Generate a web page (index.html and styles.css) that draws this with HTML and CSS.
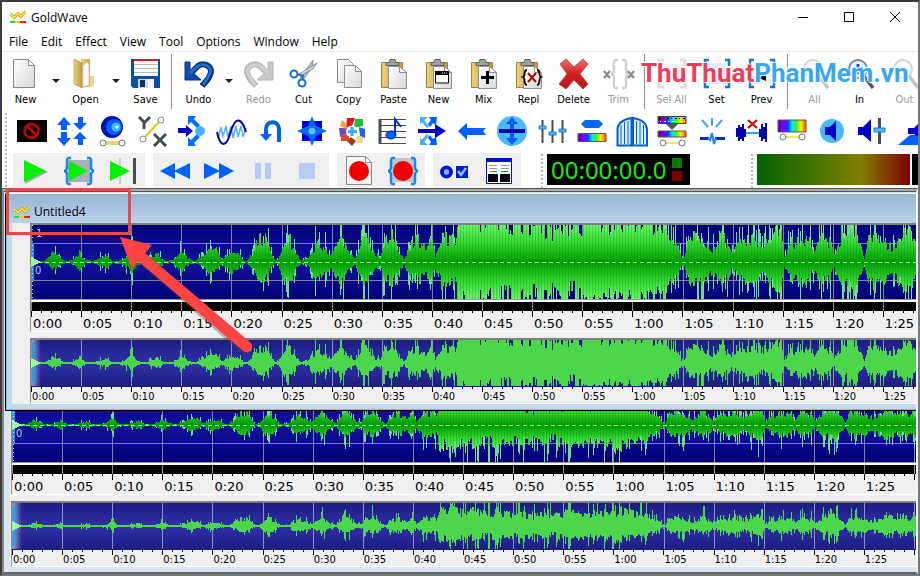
FILE: index.html
```html
<!DOCTYPE html>
<html lang="en">
<head>
<meta charset="utf-8">
<title>GoldWave</title>
<link rel="stylesheet" href="styles.css">
</head>
<body>
<svg class="defs" aria-hidden="true">
  <defs>
    <linearGradient id="paper" x1="0" y1="0" x2="1" y2="1"><stop offset="0" stop-color="#fff"/><stop offset="1" stop-color="#d8d8d8"/></linearGradient>
    <linearGradient id="tan" x1="0" y1="0" x2="1" y2="0"><stop offset="0" stop-color="#ecd07c"/><stop offset="1" stop-color="#c39a3c"/></linearGradient>
    <linearGradient id="redx" x1="0" y1="0" x2="0" y2="1"><stop offset="0" stop-color="#f07070"/><stop offset=".5" stop-color="#d42020"/><stop offset="1" stop-color="#b01818"/></linearGradient>
    <linearGradient id="rain" x1="0" y1="0" x2="1" y2="0"><stop offset="0" stop-color="#5000a0"/><stop offset=".2" stop-color="#8000ff"/><stop offset=".36" stop-color="#0040ff"/><stop offset=".5" stop-color="#00e8ff"/><stop offset=".65" stop-color="#30f030"/><stop offset=".82" stop-color="#f8f000"/><stop offset="1" stop-color="#ff5000"/></linearGradient>
    <linearGradient id="mainbg" x1="0" y1="0" x2="0" y2="1"><stop offset="0" stop-color="#000078"/><stop offset=".5" stop-color="#12129c"/><stop offset="1" stop-color="#000078"/></linearGradient>
    <linearGradient id="overbg" x1="0" y1="0" x2="0" y2="1"><stop offset="0" stop-color="#1c1c80"/><stop offset=".5" stop-color="#3030aa"/><stop offset="1" stop-color="#1c1c80"/></linearGradient>
    <linearGradient id="fade" x1="0" y1="0" x2="1" y2="0"><stop offset="0" stop-color="#c8c8f0" stop-opacity=".8"/><stop offset="1" stop-color="#c8c8f0" stop-opacity="0"/></linearGradient>
    <symbol id="logo" viewBox="0 0 16 16"><path d="M0 4.500l4 4 4-4 3 3 4.500-5" fill="none" stroke="#b09000" stroke-width="2.800"/><path d="M0 4.500l4 4 4-4 3 3 4.500-5" fill="none" stroke="#ffe838" stroke-width="1.600"/><path d="M0 12h5v2H0z" fill="#20e050"/><path d="M5 12h5v2H5z" fill="#f0d020"/><path d="M10 12h6v2h-6z" fill="#e02020"/></symbol>
    <symbol id="clip" viewBox="0 0 32 32"><path d="M3.500 4.500h21v25h-21z" fill="url(#tan)" stroke="#a88230"/><path d="M8 4.500h3l1-3h5l1 3h3v3H8z" fill="#a0a0a0" stroke="#606060"/><path d="M10.500 8.500h11l7 6v16h-18z" fill="url(#paper)" stroke="#909090"/><path d="M21.500 8.500v6h7z" fill="#fff" stroke="#909090"/></symbol>
    <symbol id="braces" viewBox="0 0 32 32"><path d="M8 3H6C4 3 4 4 4 6v6c0 3-1 4-3 4 2 0 3 1 3 4v6c0 2 0 3 2 3h2M24 3h2c2 0 2 1 2 3v6c0 3 1 4 3 4-2 0-3 1-3 4v6c0 2 0 3-2 3h-2" fill="none" stroke="#1888e8" stroke-width="2.500"/></symbol>
    <symbol id="lens" viewBox="0 0 32 32"><circle cx="14" cy="11" r="9" fill="#e4f2ff" stroke="#888" stroke-width="2"/><path d="M20 18l9 12" stroke="#555" stroke-width="3.500"/></symbol>
  </defs>
</svg>

<div class="app">
  <header class="titlebar">
    <svg class="logo"><use href="#logo"/></svg>
    <h1>GoldWave</h1>
    <div class="winbuttons">
      <button aria-label="Minimize"><svg viewBox="0 0 12 12"><path d="M1 6.500h10" /></svg></button>
      <button aria-label="Maximize"><svg viewBox="0 0 12 12"><path d="M1.500 1.500h9v9h-9z"/></svg></button>
      <button aria-label="Close"><svg viewBox="0 0 12 12"><path d="M1 1l10 10M11 1L1 11"/></svg></button>
    </div>
  </header>
  <nav class="menu">
    <button>File</button><button>Edit</button><button>Effect</button><button>View</button><button>Tool</button><button>Options</button><button>Window</button><button>Help</button>
  </nav>

  <div class="maintools">
    <button class="tool"><svg viewBox="0 0 32 32"><path d="M3.500 1.500h15l6 6v22h-21z" fill="url(#paper)" stroke="#888"/><path d="M18.500 1.500v6h6z" fill="#fff" stroke="#888"/></svg>New</button>
    <button class="drop" aria-label="New options"></button>
    <button class="tool"><svg viewBox="0 0 32 32"><path d="M11 1h9v22h3v5l-12 2z" fill="url(#tan)"/><path d="M13 8l4-4 2 3v20l-6 2z" fill="#f8f8f8" stroke="#bbb" stroke-width=".5"/><path d="M4 1l8 4v25l-8-4z" fill="url(#tan)" stroke="#b89040" stroke-width=".6"/><path d="M20 18h4v10h-4z" fill="#e8d49a"/></svg>Open</button>
    <button class="drop" aria-label="Open options"></button>
    <button class="tool"><svg viewBox="0 0 32 32"><path d="M1 1h29v29H3l-2-2z" fill="#0a4ea8"/><path d="M4 1h24v17H4z" fill="#fff"/><path d="M4 1h24v2H4z" fill="#c82030"/><path d="M4 6.500h24M4 10.500h24M4 14.500h24" stroke="#b8b8c0"/><path d="M8 21h16v9H8z" fill="#d8d8d8"/><path d="M10 22h5v7h-5z" fill="#063070"/><path d="M18 21h6v9h-6z" fill="#f8f8f8"/></svg>Save</button>
    <i class="sep"></i>
    <button class="tool"><svg viewBox="0 0 32 32"><path d="M9 14L15 8c7-5 16 2 12 9-1 4-4 6-8 11" fill="none" stroke="#062e7c" stroke-width="6"/><path d="M2 4h5v8l11 10H2z" fill="#0c4cb0" stroke="#062e7c"/><path d="M7 15l8-7c7-4 15 2 12 8l-7 11" fill="none" stroke="#1c6cd4" stroke-width="3"/></svg>Undo</button>
    <button class="drop" aria-label="Undo options"></button>
    <button class="tool" disabled><svg viewBox="0 0 32 32"><path d="M23 14l-6-6C10 3 1 10 5 17c1 4 4 6 8 11" fill="none" stroke="#b8b8b8" stroke-width="6"/><path d="M30 4h-5v8L14 22h16z" fill="#c8c8c8" stroke="#b4b4b4"/><path d="M25 15l-8-7C10 4 2 10 5 16l7 11" fill="none" stroke="#d0d0d0" stroke-width="3"/></svg>Redo</button>
    <button class="tool"><svg viewBox="0 0 32 32"><path d="M12 20L25 2l-1 8-9 12z" fill="#b4bcc4" stroke="#707880" stroke-width=".7"/><path d="M11 16L29 5l-4 6-13 7z" fill="#d0d4d8" stroke="#707880" stroke-width=".7"/><circle cx="6" cy="16" r="3.500" fill="none" stroke="#1870c0" stroke-width="2"/><circle cx="14" cy="25" r="3.500" fill="none" stroke="#1870c0" stroke-width="2"/><path d="M9 16l6 2-1 4" fill="none" stroke="#1870c0" stroke-width="2"/></svg>Cut</button>
    <button class="tool"><svg viewBox="0 0 32 32"><path d="M4.500 1.500h11l5 5v18h-16z" fill="url(#paper)" stroke="#909090"/><path d="M11.500 7.500h11l6 6v16h-17z" fill="url(#paper)" stroke="#909090"/><path d="M22.500 7.500v6h6z" fill="#fff" stroke="#909090"/></svg>Copy</button>
    <button class="tool"><svg><use href="#clip"/></svg>Paste</button>
    <button class="tool"><svg viewBox="0 0 32 32"><use href="#clip"/><path d="M12.500 14h13v11h-13z" fill="#fff" stroke="#000"/><path d="M12 13h14v4H12z"/><path d="M19 15h5" stroke="#fff" stroke-dasharray="1 1"/></svg>New</button>
    <button class="tool"><svg viewBox="0 0 32 32"><use href="#clip"/><path d="M19.500 13v13M13 19.500h13" stroke="#000" stroke-width="3"/></svg>Mix</button>
    <button class="tool"><svg viewBox="0 0 32 32"><use href="#clip"/><path d="M15 15l8 9M23 15l-8 9" stroke="#b00000" stroke-width="2"/><path d="M14 12c-4 0-1 6-4 7 3 1 0 8 4 8M24 12c4 0 1 6 4 7-3 1 0 8-4 8" fill="none" stroke="#000" stroke-width="1.800"/></svg>Repl</button>
    <button class="tool"><svg viewBox="0 0 32 32"><path d="M2 6l6-5 8 8 9-8 5 5-8 10 8 10-5 5-9-9-8 9-7-5 8-10z" fill="url(#redx)" stroke="#c03838" stroke-width=".8"/></svg>Delete</button>
    <button class="tool" disabled><svg viewBox="0 0 32 32"><path d="M15 2h-2c-3 0-2 4-2 9 0 3-1 5-3 5 2 0 3 2 3 5 0 5-1 9 2 9h2M19 2h2c3 0 2 4 2 9 0 3 1 5 3 5-2 0-3 2-3 5 0 5 1 9-2 9h-2" fill="none" stroke="#d0d0d0" stroke-width="2.500"/><path d="M1 13l6 7M7 13l-6 7M25 13l6 7M31 13l-6 7" stroke="#888" stroke-width="2"/></svg>Trim</button>
    <i class="sep"></i>
    <button class="tool" disabled><svg viewBox="0 0 32 32"><path d="M8 2H3v6M24 2h5v6M3 23v6h5M29 23v6h-5M3 12v7M29 12v7" fill="none" stroke="#ddd" stroke-width="3"/><path d="M6 6h20v19H6z" fill="#f0f0f0"/></svg>Sel All</button>
    <button class="tool"><svg viewBox="0 0 32 32"><path d="M8 2H4v6M24 2h4v6M4 23v6h4M28 23v6h-4" fill="none" stroke="#1878d0" stroke-width="2.500"/><path d="M7 5h18v21H7z" fill="#e4ecf6"/></svg>Set</button>
    <button class="tool"><svg viewBox="0 0 32 32"><path d="M8 2H4v6M24 2h4v6M4 23v6h4M28 23v6h-4" fill="none" stroke="#1878d0" stroke-width="2.500"/><path d="M7 5h18v21H7z" fill="#eaf1f8"/><path d="M13 20l7-5v8z"/></svg>Prev</button>
    <i class="sep"></i>
    <button class="tool faint" disabled><svg><use href="#lens"/></svg>All</button>
    <button class="tool"><svg viewBox="0 0 32 32"><use href="#lens"/><path d="M14 6v10M9 11h10" stroke="#1060c0" stroke-width="3"/></svg>In</button>
    <button class="tool faint" disabled><svg><use href="#lens"/></svg>Out</button>
    <div class="watermark"><span>ThuThuat</span><span class="wm2">PhanMem.vn</span></div>
  </div>

  <div class="lower">
    <i class="grip"></i>
    <div class="rows">
      <div class="effects">
        <button aria-label="Censor"><svg viewBox="0 0 32 32"><path d="M1 5h30v22H1z"/><circle cx="15.500" cy="16" r="7" fill="none" stroke="#c80000" stroke-width="2.500"/><path d="M11 11l10 10" stroke="#c80000" stroke-width="2.500"/></svg></button>
        <button aria-label="Compressor"><svg viewBox="0 0 32 32"><path d="M8 2l7 8h-4v5H5v-5H1zM8 31l7-8h-4v-6H5v6H1zM24 15l7-7h-4V2h-5v6h-5zM24 17l7 7h-4v6h-5v-6h-5z" fill="#0060ff"/></svg></button>
        <button aria-label="Doppler"><svg viewBox="0 0 32 32"><circle cx="16" cy="12" r="11" fill="#0010b0"/><circle cx="18" cy="12" r="8" fill="#0060ff"/><circle cx="20" cy="12" r="4.500" fill="#48b8ff"/><circle cx="21" cy="12" r="1.500" fill="#fff"/><path d="M8 28h17" stroke="#b8a820" stroke-width="3"/><path d="M8 28h17" stroke="#fff060" stroke-width="1.500"/><circle cx="7" cy="28" r="3" fill="#fff" stroke="#777"/><circle cx="26" cy="28" r="3" fill="#fff" stroke="#777"/></svg></button>
        <button aria-label="Expression"><svg viewBox="0 0 32 32"><path d="M3 2l5 5v7M14 2L8 8M18 19l12 12M30 19L18 31" fill="none" stroke="#444c54" stroke-width="3"/><path d="M7 24L24 6" stroke="#d8d030" stroke-width="2.500"/><circle cx="25" cy="5" r="3" fill="#fff" stroke="#888"/><circle cx="7" cy="24" r="3" fill="#fff" stroke="#888"/></svg></button>
        <button aria-label="Echo"><svg viewBox="0 0 32 32"><path d="M12 1h8l-2 3 6 6-3 3-6-6-3 3zM12 31h8l-2-3 6-6-3-3-6 6-3-3z" fill="#0070ff"/><path d="M2 13h8V10l7 6-7 6v-4H2z" fill="#0000c0"/><circle cx="24" cy="16" r="5" fill="#48b0ff"/></svg></button>
        <button aria-label="Filter"><svg viewBox="0 0 32 32"><path d="M3 21l2-9 2 9 3-10 2 11 3-11 2 12 3-12 2 11 3-11 2 11 3-9" fill="none" stroke="#58b0e8" stroke-width="1.500"/><path d="M1 17C4 32 10 33 14 19S24-2 30 17" fill="none" stroke="#0000a8" stroke-width="2"/></svg></button>
        <button aria-label="Reverse"><svg viewBox="0 0 32 32"><path d="M10 20v-6c0-9 13-9 13 0v13" fill="none" stroke="#0060e8" stroke-width="4"/><path d="M4 19h12l-6 7z" fill="#0060ff"/></svg></button>
        <button aria-label="Mechanize"><svg viewBox="0 0 32 32"><path d="M6 6h20v20H6z" fill="#0000c8"/><path d="M16 1l4 10 11 5-11 5-4 10-4-10-11-5 11-5z" fill="#0068ff"/><circle cx="16" cy="16" r="3.500" fill="#60c0ff"/></svg></button>
        <button aria-label="Pitch wheel"><svg viewBox="0 0 32 32"><path d="M11 3h8l-3 8-6 2z" fill="#e01020"/><path d="M19 4h8v7l-9 2z" fill="#20c030"/><path d="M23 12l6 2v9l-5-2z" fill="#2060f0"/><path d="M21 20l6 2v6h-7z" fill="#f0d890"/><path d="M15 22l5 4-4 5-5-5z" fill="#904010"/><path d="M5 21l8-2v7H5z" fill="#e04820"/><path d="M3 13l8 0v6l-7 3z" fill="#7050c0"/><path d="M6 5l5 4-1 5-6-3z" fill="#f0a850"/><circle cx="16" cy="16.500" r="6" fill="#fff"/><path d="M16 12v9M12 16.500h9" stroke="#30b0ff" stroke-width="3"/></svg></button>
        <button aria-label="Pitch"><svg viewBox="0 0 32 32"><path d="M4 4.500h26M4 10.500h26M4 16.500h26M4 22.500h26M4 28.500h26" stroke="#444c54"/><path d="M4 4v25" stroke="#444c54" stroke-width="3"/><ellipse cx="15" cy="20" rx="5" ry="4" fill="#0060ff" stroke="#0020a0"/><path d="M19 20V4l6 8" fill="none" stroke="#0030d0" stroke-width="2"/></svg></button>
        <button aria-label="Dynamics"><svg viewBox="0 0 32 32"><path d="M12 12L5 4M12 20l-7 8" stroke="#48b0f0" stroke-width="3"/><path d="M4 9V2h8zM4 23v7h8z" fill="#48b0f0"/><path d="M13 2h8l-1 8-3-2-3 4-2-3 3-4zM13 30h8l-1-8-3 2-3-4-2 3 3 4z" fill="#0060ff"/><path d="M2 14h17V9l11 7-11 7v-5H2z" fill="#0000c8"/></svg></button>
        <button aria-label="Offset"><svg viewBox="0 0 32 32"><path d="M2 16l9-8v5h19l-3 3 3 4H11v5z" fill="#0060ff"/></svg></button>
        <button aria-label="Volume shape"><svg viewBox="0 0 32 32"><circle cx="16" cy="16" r="15" fill="#48b8ff"/><path d="M16 2l6 7h-4v5h-4V9h-4zM16 30l6-7h-4v-5h-4v5h-4z" fill="#0060e8"/><path d="M3 14h26v4H3z" fill="#0000a8"/></svg></button>
        <button aria-label="Equalizer"><svg viewBox="0 0 32 32"><path d="M6.500 5v23M16.500 5v23M26.500 5v23" stroke="#444c54" stroke-width="2"/><path d="M3 11h7v3H3zM13 17h7v3h-7zM23 14h7v3h-7z" fill="#48b8ff" stroke="#2080c0"/></svg></button>
        <button aria-label="Spectrum filter"><svg viewBox="0 0 32 32"><path d="M9 5h14l4 4-4 4H9L5 9z" fill="#0068f0"/><path d="M2 18.500h28v8H2z" fill="url(#rain)" stroke="#705050"/></svg></button>
        <button aria-label="Noise gate"><svg viewBox="0 0 32 32"><path d="M1.500 30.500V15C1.500 6 10 4 15.500 3v27.500zM31 30.500V15c0-9-8-11-14-12v27.500z" fill="#d8f0ff" stroke="#0060d0" stroke-width="2"/><path d="M5 10v19M8.500 7v22M12 6v23M20.500 6v23M24 7v22M27.500 10v19" stroke="#0060d0"/></svg></button>
        <button aria-label="Noise reduction"><svg viewBox="0 0 32 32"><path d="M2 1.500h28v7H2z" fill="url(#rain)" stroke="#444"/><path d="M3 3.500h26" stroke="#000" stroke-dasharray="2 2 1 3"/><path d="M4 6.500h25" stroke="#fff" stroke-dasharray="1 3 2 2"/><path d="M10 9h12l-6 6z" fill="#505860"/><path d="M2 16h28v6H2z" fill="url(#rain)" stroke="#705050"/><path d="M8 28h17" stroke="#f0e868" stroke-width="2"/><circle cx="7" cy="28" r="3" fill="#fff" stroke="#777"/><circle cx="26" cy="28" r="3" fill="#fff" stroke="#777"/></svg></button>
        <button aria-label="Pop click"><svg viewBox="0 0 32 32"><path d="M16 3v8M6 5l6 7M26 5l-6 7" stroke="#48a8e8" stroke-width="2"/><path d="M4 22h9v3H4zM19 22h10v3H19z" fill="#0030c8"/><path d="M12 23l2 2 2-7 2 11 2-6" fill="none" stroke="#2080ff" stroke-width="2"/></svg></button>
        <button aria-label="Silence reduction"><svg viewBox="0 0 32 32"><path d="M12 5l9 8M21 5l-9 8" stroke="#d00000" stroke-width="2"/><path d="M1 13v9M3 10v16M5 12v12M7 9v17M9 14v8M24 14v8M26 9v17M28 12v12M30 8v19" stroke="#0000b0" stroke-width="2"/><path d="M10 18h13" stroke="#40a0f0" stroke-width="2"/></svg></button>
        <button aria-label="Smoother"><svg viewBox="0 0 32 32"><path d="M2 5h28v12H2z" fill="url(#rain)" stroke="#705050"/><path d="M8 22h17" stroke="#f0e868" stroke-width="2"/><circle cx="7" cy="22" r="3" fill="#fff" stroke="#777"/><circle cx="26" cy="22" r="3" fill="#fff" stroke="#777"/></svg></button>
        <button aria-label="Volume"><svg viewBox="0 0 32 32"><circle cx="16" cy="16" r="12" fill="#48b8ff"/><path d="M9 12h5l6-6v20l-6-6H9z" fill="#0000c8"/></svg></button>
        <button aria-label="Change volume"><svg viewBox="0 0 32 32"><path d="M2 12h5l8-8v23l-8-7H2z" fill="#0000c8"/><path d="M23.500 3v26" stroke="#444c54" stroke-width="3"/><path d="M18 13h11v4H18z" fill="#48b8ff" stroke="#2080b0"/></svg></button>
        <button aria-label="Fade"><svg viewBox="0 0 32 32"><path d="M2 30L14 20h6l12 10z" fill="#0060ff"/><path d="M12 13h6l8-8v20l-8-6h-6z" fill="#0000c8"/></svg></button>
      </div>
      <div class="controls">
        <div class="group">
          <button aria-label="Play"><svg viewBox="0 0 32 32"><path d="M6 6l23 11L6 29z" fill="#aaa"/><path d="M5 5l22 11L5 27z" fill="#00f000"/></svg></button>
          <button aria-label="Play selection"><svg viewBox="0 0 32 32"><path d="M5 5h22v22H5z" fill="#a8b0bc"/><path d="M6 6l19 10L6 26z" fill="#00f000"/><use href="#braces"/></svg></button>
          <button aria-label="Play to end"><svg viewBox="0 0 32 32"><path d="M13 3v26" stroke="#aaa"/><path d="M3 6l20 10L3 26z" fill="#00f000"/><path d="M26 3h3v26h-3z" fill="#444c54"/></svg></button>
        </div>
        <div class="group">
          <button aria-label="Rewind"><svg viewBox="0 0 32 32"><path d="M1 16L16 8v16zM15 16l16-8v16z" fill="#0060ff"/></svg></button>
          <button aria-label="Fast forward"><svg viewBox="0 0 32 32"><path d="M31 16L16 8v16zM17 16L1 8v16z" fill="#0060ff"/></svg></button>
          <button aria-label="Pause" disabled><svg viewBox="0 0 32 32"><path d="M8 8h6v16H8zM18 8h6v16h-6z" fill="#b8ccf4"/></svg></button>
          <button aria-label="Stop" disabled><svg viewBox="0 0 32 32"><path d="M8 8h16v16H8z" fill="#b8ccf4"/></svg></button>
        </div>
        <div class="group">
          <button aria-label="Record new"><svg viewBox="0 0 32 32"><path d="M3.500 1.500h19l6 6v22h-25z" fill="#f4f4f4" stroke="#888"/><path d="M22.500 1.500v6h6z" fill="#fff" stroke="#888"/><circle cx="16" cy="16" r="10" fill="#f00000"/></svg></button>
          <button aria-label="Record selection"><svg viewBox="0 0 32 32"><path d="M5 3h22v24H5z" fill="#c0c4cc"/><use href="#braces"/><circle cx="16" cy="16" r="10" fill="#f00000"/></svg></button>
        </div>
        <div class="group">
          <button aria-label="Control properties"><svg viewBox="0 0 32 32"><circle cx="7.500" cy="17" r="4.500" fill="none" stroke="#0018d8" stroke-width="4"/><circle cx="7.500" cy="17" r="2.500" fill="#80b0ff"/><path d="M17 11h12v12H17z" fill="#0018e0"/><path d="M19 16l3 4 5-7" fill="none" stroke="#90c0ff" stroke-width="2.500"/></svg></button>
          <button aria-label="Control window"><svg viewBox="0 0 32 32"><path d="M3.500 3.500h25v25h-25z" fill="#fff" stroke="#0010c0"/><path d="M3 3h26v4H3z" fill="#0010c0"/><path d="M6 10.500h8M6 13.500h8M18 10.500h8M18 13.500h8" stroke="#999"/><path d="M7 16.500h7" stroke="#20c020"/><path d="M18 16.500h7" stroke="#e02020"/><path d="M5 19h10v8H5zM17 19h10v8H17z"/></svg></button>
        </div>
        <div class="panel time"><i class="grip"></i><div class="display"><output>00:00:00.0</output><span class="leds"><i></i><i></i></span></div></div>
        <div class="panel level"><i class="grip"></i><div class="meter"><i></i></div></div>
      </div>
    </div>
  </div>

  <main class="mdi">
    <section class="doc back" aria-label="Background sound">
      <div class="caption"></div>
      <div class="content">
        <div class="view main" data-kind="main" data-gain="0.5"></div>
        <ol class="ruler big"></ol>
        <div class="view over" data-kind="over" data-gain="0.5"></div>
        <ol class="ruler small"></ol>
      </div>
    </section>
    <section class="doc front" aria-label="Untitled4">
      <div class="caption"><svg class="logo"><use href="#logo"/></svg>Untitled4</div>
      <div class="content">
        <div class="view main" data-kind="main" data-gain="1"></div>
        <ol class="ruler big"></ol>
        <div class="view over" data-kind="over" data-gain="1"></div>
        <ol class="ruler small"></ol>
      </div>
    </section>
  </main>
</div>

<div class="mark"></div>
<svg class="arrow" viewBox="0 0 150 130" aria-hidden="true"><path d="M4 4l32 8-7 8 100 86c7 7-1 15-8 9L22 28l-6 8z" fill="#444" opacity=".35" transform="translate(3 4)"/><path d="M4 4l32 8-7 8 105 89c6 7-1 14-8 8L22 28l-6 8z" fill="#ff4444"/></svg>
<script src="wave.js"></script>
</body>
</html>
```
FILE: styles.css
```css
* { box-sizing: border-box; }
body { margin: 0; background: #fff; color: #000; font: 12px "Open Sans", "Noto Sans", sans-serif; overflow: hidden; }
button { border: 0; padding: 0; margin: 0; background: none; font: inherit; color: inherit; }
svg { display: block; }
.defs { position: absolute; width: 0; height: 0; }
.app { height: 100vh; display: flex; flex-direction: column; border: 2px solid #3c3c3c; border-right-color: #777; border-bottom-color: #777; overflow: hidden; }

.titlebar { display: flex; align-items: center; height: 30px; padding-left: 8px; flex: none; }
.logo { width: 16px; height: 16px; margin-right: 4px; }
h1 { font-size: 12px; font-weight: 400; margin: 0; padding-left: 1px; flex: 1; }
.winbuttons { display: flex; }
.winbuttons button { width: 46px; height: 30px; display: grid; place-items: center; }
.winbuttons svg { width: 12px; height: 12px; fill: none; stroke: #000; }
.menu { display: flex; height: 20px; border-bottom: 1px solid #e8e8e8; flex: none; }
.menu button { padding: 0 6px 0 7px; line-height: 18px; }

.maintools { position: relative; display: flex; height: 59px; padding: 6px 0 0 1px; flex: none; overflow: hidden; }
.tool { flex: none; width: 45px; display: flex; flex-direction: column; align-items: center; font: 11px/14px "DejaVu Sans Condensed", "DejaVu Sans", sans-serif; }
.tool svg { width: 32px; height: 32px; margin-bottom: 3px; }
.tool:disabled { color: #989898; }
.faint svg { opacity: .35; }
.drop { flex: none; width: 15px; height: 46px; display: grid; place-items: center; }
.drop::before { content: ""; border: 4px solid transparent; border-top-color: #222; border-bottom: 0; }
.sep { flex: none; width: 8px; height: 55px; margin-top: -4px; border-left: 3px solid #fff; border-right: 4px solid #fff; background: #909090; }
.watermark { position: absolute; left: 639px; top: 3px; white-space: nowrap; font: bold 26px/36px Roboto, "Liberation Sans", sans-serif; color: #ee3d5c; text-shadow: 0 0 2px #fff, 1px 1px 1px #fff, -1px -1px 1px #fff; }
.wm2 { color: #38a8ec; }

.lower { display: flex; padding: 0 0 0 3px; flex: none; overflow: hidden; height: 77px; }
.grip { flex: none; width: 2px; margin-top: 2px; background: repeating-linear-gradient(#b8b8b8 0 2px, #fff 2px 4px); }
.rows { padding-left: 4px; flex: 1; min-width: 0; }
.effects { display: flex; height: 41px; padding-left: 1px; overflow: hidden; }
.effects button { flex: none; width: 40px; height: 40px; display: grid; place-items: center; }
.effects svg, .group svg { width: 32px; height: 32px; }
.controls { display: flex; gap: 8px; padding-left: 2px; height: 36px; }
.group { display: flex; background: #efefef; height: 34px; margin-top: 1px; }
.group button { width: 44px; padding-top: 1px; display: grid; place-items: center; }
.panel { display: flex; gap: 4px; margin-left: 12px; }
.display { display: flex; align-items: center; gap: 6px; width: 143px; height: 31px; margin-top: 2px; padding-left: 4px; background: #000; color: #18e818; }
.display output { font: 24px/30px "Noto Sans", sans-serif; }
.leds i { display: block; width: 10px; height: 10px; margin: 3px 0; background: #008000; }
.leds i + i { background: #800000; }
.level { flex: 1; margin-left: 53px; }
.meter { flex: 1; height: 31px; margin-top: 2px; background: #000; }
.meter i { display: block; height: 31px; width: calc(100% - 6px); border-right: 2px solid #fff; background: linear-gradient(90deg, #006400, #808000 68%, #800000); }

.mdi { position: relative; flex: 1; min-height: 0; border: 2px solid #888; border-top: 4px double #555; border-right-color: #f4f4f4; border-bottom-color: #666; background: #ababab; overflow: hidden; }
.doc { position: absolute; right: 0; background: #c4d8ee; }
.back { left: 0; top: 0; bottom: 0; background: #d9e5f3; padding-left: 6px; }
.front { left: 1px; top: 1px; border-left: 1px solid #000; border-top: 1px solid #fff; border-bottom: 1px solid #000; box-shadow: inset 0 -1px #40d8f8, inset 1px 0 #70c8e8; padding: 0 0 6px 6px; }
.caption { display: flex; align-items: center; height: 29px; padding-top: 6px; }
.front .caption { margin-left: -6px; padding-left: 8px; background: linear-gradient(#98b4d2, #bcd2ea); }
.back .caption { height: 194px; }
.content { background: #efefef; }
.front .content { padding-left: 18px; }
.back .content { padding-left: 1px; }
.view { border-top: 2px solid #808080; border-left: 1px solid #808080; overflow: hidden; }
.view svg { width: 100%; }
.main { height: 88px; background: #000; }
.over { height: 49px; margin-top: 6px; }
.ruler { list-style: none; display: flex; margin: 0; padding: 0; overflow: hidden; white-space: nowrap; border-left: 1px solid #999; border-bottom: 1px solid #fff; }
.ruler li { flex: none; position: relative; border-left: 1px solid #000; }
.ruler li::before { content: ""; position: absolute; left: 9px; top: 0; width: 31px; height: 2px; background: repeating-linear-gradient(90deg, #000 0 1px, transparent 1px 10px); }
.big { height: 21px; }
.big li { height: 6px; font: 13px/25px "DejaVu Sans", sans-serif; padding-left: 1px; }
.small { height: 17px; }
.small li { height: 5px; font: 11px/19px "DejaVu Sans Condensed", "DejaVu Sans", sans-serif; }

.mark { position: absolute; left: 6px; top: 188px; width: 125px; height: 47px; border: 3px solid #e84848; }
.arrow { position: absolute; left: 116px; top: 233px; width: 150px; height: 130px; }
```
FILE: wave.js
```js
// Time scale shared by every wave view and ruler.
const STEP = 50.12;
const PPS = STEP / 5;

// Loudness envelope as [seconds, level] pairs; 1 fills half of the view.
const ENV = [[0,.02],[1.2,.03],[1.6,.12],[2.1,.38],[3,.12],[3.5,.03],[4.2,.12],[4.8,.38],[5.3,.1],[6,.04],[6.6,.12],[7.5,.28],
[8.1,.04],[9,.1],[9.6,.28],[10,.5],[10.6,.12],[11.5,.04],[12,.22],[12.6,.42],[13.2,.05],[14.2,.1],[15,.48],[15.5,.18],
[16.3,.04],[17,.2],[17.7,.45],[18.5,.5],[19,.08],[19.5,.3],[20,.48],[20.9,.2],[21.4,.03],[22,.3],[22.7,.9],[23.3,1],
[24,.25],[24.4,.05],[24.8,.3],[25.2,.9],[25.8,.9],[26.4,.35],[26.9,.06],[27.6,.2],[28,.5],[28.7,.9],[29.3,.45],[30,.25],
[30.4,.9],[31,.95],[31.6,.45],[32.3,.15],[33,.9],[33.6,1.05],[34.2,.35],[34.8,.2],[35.4,.9],[36,1.05],[36.7,.4],[37.2,.12],
[37.8,.7],[38.6,.9],[39.3,.6],[40,.75],[40.3,.3],[41,1.2],[41.6,.9],[42.3,.9],[42.6,2],[43.4,2.4],[44,2.3],[45,1.7],[46,2],
[47,1.7],[49,1.7],[51,1.6],[52,1.4],[53,1.8],[54,1.4],[55,1.7],[56.5,2],[57.2,1.6],[58,1.4],[59.5,1.9],[61,2.1],[62,1.6],
[63.2,1.4],[63.8,.8],[64.4,.8],[64.8,.2],[65.2,.2],[65.4,.9],[66.5,1.1],[67.4,.8],[68,.5],[68.6,1.1],[69.4,.8],[69.9,.4],
[71,1],[72,.9],[73.1,.5],[73.6,1.1],[74.8,1.2],[75.1,.2],[75.8,.8],[77.4,1],[78,.4],[79,1.05],[79.7,.8],[80.1,.3],
[80.8,1.2],[82,1.4],[82.7,.7],[83.1,.12],[83.6,1.1],[85,1.1],[85.4,.5],[86.2,.8],[87,1.2],[88.3,1],[89,.8],[90,1.1]];

const noise = n => {
  const s = Math.sin(n * 127.1 + 11.7) * 43758.5453;
  return s - Math.floor(s);
};

function level(t) {
  t = Math.min(t, 89.9);
  let i = 1;
  while (ENV[i][0] < t) i++;
  const [t0, a] = ENV[i - 1], [t1, b] = ENV[i];
  return a + (b - a) * (t - t0) / (t1 - t0);
}

function column(x, gain, side) {
  const e = level(x / PPS) * gain;
  const body = .38 + .42 * noise(Math.floor(x / 2) + side * 900) + .1 * noise(x);
  const hit = e > .1 * gain && noise(x * 3 + 7) > .72 ? 1.15 + 1.1 * noise(x * 5 + side) : 1;
  const scale = side ? .85 : 1;
  const base = Math.min(e * body * scale, 1);
  return [base, Math.min(Math.max(e * body * hit * scale, .03), 1)];
}

function view(el) {
  const main = el.dataset.kind === 'main';
  const gain = +el.dataset.gain;
  const w = el.clientWidth, h = main ? 74 : 46, mid = h / 2;
  let bars = '', dark = '', tips = '';
  for (let x = 1; x < w; x++) {
    const up = column(x, gain, 0), down = column(x, gain, 1);
    const full = `M${x} ${mid - up[1] * mid}h1V${mid + down[1] * mid}h-1z`;
    if (!main) { bars += full; continue; }
    tips += full;
    const body = `M${x} ${mid - up[0] * mid}h1V${mid + down[0] * mid}h-1z`;
    bars += body;
    if (x % 3 === 0) dark += body;
  }
  let grid = '', band = '';
  for (let s = 0; s * STEP < w; s++) {
    const x = Math.round(s * STEP);
    grid += `M${x}.5 0V${h}`;
    band += `M${x}.5 77V90`;
  }
  const total = main ? 86 : h + 1;
  const id = 'g' + gain * 10;
  let out = `<svg viewBox="0 0 ${w} ${total}" height="${total}" shape-rendering="crispEdges">`;
  if (main) {
    out += `<defs><linearGradient id="${id}" gradientUnits="userSpaceOnUse" x1="0" x2="0" y1="${mid - mid * Math.sqrt(gain)}" y2="${mid + mid * Math.sqrt(gain)}">
      <stop offset="0" stop-color="#68f868"/><stop offset=".25" stop-color="#34d834"/><stop offset=".5" stop-color="#009c00"/>
      <stop offset=".75" stop-color="#34d834"/><stop offset="1" stop-color="#68f868"/></linearGradient></defs>
      <rect width="${w}" height="${h}" fill="url(#mainbg)"/>
      <rect width="3" y="18" height="38" fill="#1890e8"/>
      <path d="M1.500 0V74" stroke="#d8e8ff" stroke-dasharray="1 3"/>
      <path d="${grid}M0 18.500H${w}M0 55.500H${w}" stroke="#8080a0"/>
      <path d="${tips}" fill="#70dc90"/><path d="${bars}" fill="url(#${id})"/><path d="${dark}" fill="#008800" opacity=".3"/>
      <path d="M0 37.500H${w}" stroke="#a0f0a0" stroke-dasharray="4 3"/>
      <rect y="74" width="${w}" height="1" fill="#999"/><rect y="75" width="${w}" height="2" fill="#fff"/>
      <path d="${band}" stroke="#909090"/>
      <text x="5" y="12" fill="#c8c0f0" font-size="11" font-family="DejaVu Sans Condensed">1</text>
      <text x="4" y="49" fill="#c8c0f0" font-size="11" font-family="DejaVu Sans Condensed">0</text>`;
  } else {
    out += `<rect width="${w}" height="${total}" fill="url(#overbg)"/>
      <rect width="10" height="${h}" fill="url(#fade)"/><rect y="3" width="4" height="40" fill="#20a0e0"/>
      <path d="${grid}" stroke="#9090b8"/><path d="${bars}" fill="#4cd64c"/><rect y="${mid - 1}" width="${w}" height="2" fill="#4cd64c"/>`;
  }
  out += `<path d="M0 ${mid - 5}L10 ${mid}L0 ${mid + 5}z" fill="#a0ffa0"/></svg>`;
  el.innerHTML = out;
}

// Adds a mark every five seconds; the last one stays bare when its label would not fit.
function ruler(el) {
  for (let s = 0; s * STEP < el.clientWidth; s++) {
    const li = document.createElement('li');
    if (s * STEP + 32 < el.clientWidth) {
      li.textContent = Math.floor(s / 12) + ':' + String(s * 5 % 60).padStart(2, '0');
    }
    li.style.width = STEP + 'px';
    el.append(li);
  }
}

document.querySelectorAll('.view').forEach(view);
document.querySelectorAll('.ruler').forEach(ruler);
```
